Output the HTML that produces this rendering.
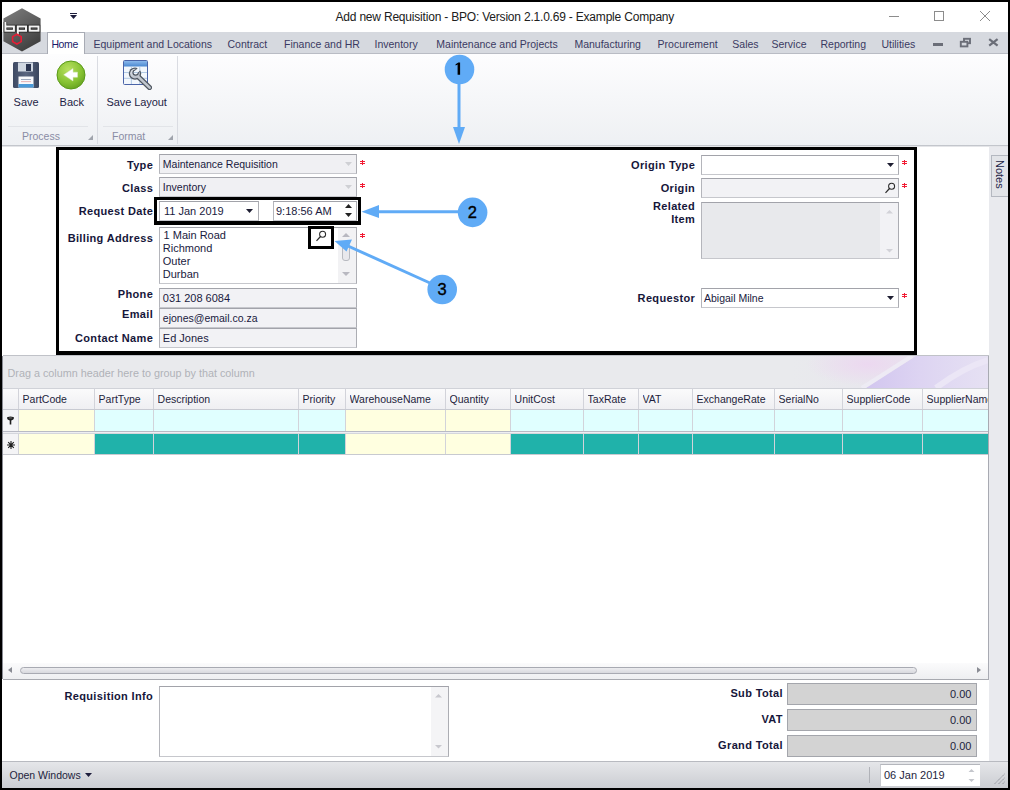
<!DOCTYPE html>
<html><head><meta charset="utf-8"><title>Add new Requisition</title>
<style>
html,body{margin:0;padding:0;}
body{width:1010px;height:790px;background:#000;position:relative;overflow:hidden;font-family:"Liberation Sans",sans-serif;}
body>div,body>svg{position:absolute;}
.t{white-space:nowrap;}
</style></head><body>
<div style="left:2px;top:2px;width:1006px;height:786px;background:#fff;"></div>
<div class="t" style="left:335.5px;top:10.84px;font-size:12px;line-height:12px;color:#202020;letter-spacing:-0.2px;">Add new Requisition - BPO: Version 2.1.0.69 - Example Company</div>
<div style="left:70px;top:13px;width:7px;height:1px;background:#1e1e3c;"></div>
<svg style="left:69px;top:15px" width="9" height="5"><path d="M1 0 L8 0 L4.5 4 Z" fill="#1e1e3c"/></svg>
<div style="left:889px;top:16px;width:10px;height:1px;background:#8c8c8c;"></div>
<div style="left:934px;top:11px;width:10px;height:10px;border:1px solid #8c8c8c;box-sizing:border-box;"></div>
<svg style="left:979px;top:10px" width="12" height="12"><path d="M1 1 L11 11 M11 1 L1 11" stroke="#8c8c8c" stroke-width="1"/></svg>
<div style="left:2px;top:32px;width:1006px;height:21px;background:#d6d9df;"></div>
<div style="left:2px;top:53px;width:1006px;height:1px;background:#b9bcc4;"></div>
<div style="left:47px;top:32px;width:38px;height:22px;background:#fff;border:1px solid #a8abb4;border-bottom:none;box-sizing:border-box;"></div>
<div class="t" style="left:51.4px;top:39.11px;font-size:10.5px;line-height:10.5px;color:#1a1a6a;letter-spacing:-0.35px;">Home</div>
<div class="t" style="left:93.5px;top:39.11px;font-size:10.5px;line-height:10.5px;color:#3a3a62;">Equipment and Locations</div>
<div class="t" style="left:227.5px;top:39.11px;font-size:10.5px;line-height:10.5px;color:#3a3a62;">Contract</div>
<div class="t" style="left:284px;top:39.11px;font-size:10.5px;line-height:10.5px;color:#3a3a62;">Finance and HR</div>
<div class="t" style="left:374.5px;top:39.11px;font-size:10.5px;line-height:10.5px;color:#3a3a62;">Inventory</div>
<div class="t" style="left:436.3px;top:39.11px;font-size:10.5px;line-height:10.5px;color:#3a3a62;">Maintenance and Projects</div>
<div class="t" style="left:574.4px;top:39.11px;font-size:10.5px;line-height:10.5px;color:#3a3a62;">Manufacturing</div>
<div class="t" style="left:657.6px;top:39.11px;font-size:10.5px;line-height:10.5px;color:#3a3a62;">Procurement</div>
<div class="t" style="left:732.3px;top:39.11px;font-size:10.5px;line-height:10.5px;color:#3a3a62;">Sales</div>
<div class="t" style="left:771.5px;top:39.11px;font-size:10.5px;line-height:10.5px;color:#3a3a62;">Service</div>
<div class="t" style="left:820.5px;top:39.11px;font-size:10.5px;line-height:10.5px;color:#3a3a62;">Reporting</div>
<div class="t" style="left:881.4px;top:39.11px;font-size:10.5px;line-height:10.5px;color:#3a3a62;">Utilities</div>
<div style="left:933px;top:43px;width:10px;height:2.5px;background:#6b6e78;"></div>
<svg style="left:959px;top:37px" width="13" height="11"><rect x="5" y="1.8" width="6" height="4.4" fill="none" stroke="#6b6e78" stroke-width="1.9"/><rect x="1.8" y="4.8" width="6.6" height="4.6" fill="#d6d9df" stroke="#6b6e78" stroke-width="1.9"/></svg>
<svg style="left:988px;top:38px" width="11" height="9"><path d="M1.2 1.2 L9.6 7.6 M9.6 1.2 L1.2 7.6" stroke="#6b6e78" stroke-width="2.2"/></svg>
<svg style="left:0px;top:0px" width="48" height="56" viewBox="0 0 48 56">
<defs><linearGradient id="lg" x1="0.2" y1="0" x2="0.8" y2="1"><stop offset="0" stop-color="#7a7a7a"/><stop offset="0.5" stop-color="#5c5c5c"/><stop offset="1" stop-color="#3a3a3a"/></linearGradient></defs>
<path d="M22 8.2 L40.6 18.4 L40.6 41.2 L22 51.4 L3.4 41.2 L3.4 18.4 Z" fill="url(#lg)"/>
<g fill="none" stroke="#1c1c1c" stroke-width="3.4" stroke-linejoin="miter">
<path d="M5.4 22 V30.7 H13.9 V26.5 H5.4"/><path d="M17.8 34.7 V26.5 H26 V30.7 H17.8"/><rect x="29.7" y="26.5" width="8.8" height="4.2"/>
</g>
<g fill="none" stroke="#f4f4f4" stroke-width="2" stroke-linejoin="miter">
<path d="M5.4 22 V30.7 H13.9 V26.5 H5.4"/><path d="M17.8 34.7 V26.5 H26 V30.7 H17.8"/><rect x="29.7" y="26.5" width="8.8" height="4.2"/>
</g>
<path d="M16.9 34.2 L21.2 36.6 L21.2 41.6 L16.9 44 L12.6 41.6 L12.6 36.6 Z" fill="none" stroke="#e81c34" stroke-width="1.6"/>
</svg>
<div style="left:2px;top:54px;width:1006px;height:91px;background:linear-gradient(#fdfdfe,#eef0f3);"></div>
<div style="left:2px;top:145px;width:1006px;height:1px;background:#c3c6cc;"></div>
<div style="left:2px;top:146px;width:1006px;height:1px;background:#e4e5e8;"></div>
<div style="left:97px;top:56px;width:1px;height:88px;background:#dadce2;"></div>
<div style="left:177px;top:56px;width:1px;height:88px;background:#dadce2;"></div>
<div style="left:8px;top:126px;width:80px;height:1px;background:#e2e4e8;"></div>
<div style="left:103px;top:126px;width:70px;height:1px;background:#e2e4e8;"></div>
<div class="t" style="left:13.6px;top:97.19px;font-size:11px;line-height:11px;color:#1e1e46;">Save</div>
<div class="t" style="left:59.6px;top:97.19px;font-size:11px;line-height:11px;color:#1e1e46;">Back</div>
<div class="t" style="left:106.6px;top:97.19px;font-size:11px;line-height:11px;color:#1e1e46;letter-spacing:-0.1px;">Save Layout</div>
<div class="t" style="left:22px;top:130.61px;font-size:10.5px;line-height:10.5px;color:#8a8ca4;">Process</div>
<div class="t" style="left:112px;top:130.61px;font-size:10.5px;line-height:10.5px;color:#8a8ca4;">Format</div>
<svg style="left:88px;top:135px" width="6" height="6"><path d="M5 0 L5 5 L0 5 Z" fill="#a0a4ac"/></svg>
<svg style="left:168px;top:135px" width="6" height="6"><path d="M5 0 L5 5 L0 5 Z" fill="#a0a4ac"/></svg>
<svg style="left:12px;top:61px" width="28" height="28" viewBox="0 0 28 28">
<defs><linearGradient id="fl" x1="0" y1="0" x2="1" y2="0"><stop offset="0" stop-color="#3e4a64"/><stop offset="0.5" stop-color="#5a6680"/><stop offset="1" stop-color="#3a465e"/></linearGradient></defs>
<rect x="1" y="1" width="26" height="26" rx="1.5" fill="url(#fl)"/>
<rect x="6" y="1.5" width="15" height="9" fill="#d0d8e2"/>
<rect x="14" y="3" width="5" height="7" fill="#2a3550"/>
<rect x="6.5" y="15.5" width="15" height="11" fill="#f8f9fc"/>
<rect x="6.5" y="23" width="15" height="3.5" fill="#4a9ad8"/>
<rect x="9" y="18" width="10" height="0.8" fill="#8896b0"/><rect x="9" y="20.3" width="10" height="0.8" fill="#e0a0a0"/>
</svg>
<svg style="left:56px;top:60px" width="30" height="30" viewBox="0 0 30 30">
<defs><radialGradient id="bg1" cx="0.4" cy="0.3" r="0.8"><stop offset="0" stop-color="#b8e060"/><stop offset="0.6" stop-color="#86c232"/><stop offset="1" stop-color="#5e9a1c"/></radialGradient></defs>
<circle cx="15" cy="15" r="14" fill="url(#bg1)" stroke="#5a9a18" stroke-width="1"/>
<path d="M7.7 14.8 L17 8.5 L17 12.2 L21.5 12.2 L21.5 17.2 L17 17.2 L17 21 Z" fill="#fff" stroke="#dfe8d0" stroke-width="0.5"/>
</svg>
<svg style="left:122px;top:59px" width="32" height="32" viewBox="0 0 32 32">
<defs>
<linearGradient id="hb" x1="0" y1="0" x2="0" y2="1"><stop offset="0" stop-color="#8ab8ec"/><stop offset="1" stop-color="#4a88d0"/></linearGradient>
<linearGradient id="wr" x1="0" y1="0" x2="1" y2="1"><stop offset="0" stop-color="#e4e8ee"/><stop offset="1" stop-color="#a8b0bc"/></linearGradient>
<mask id="m1"><rect width="32" height="32" fill="#fff"/><circle cx="13.6" cy="13.6" r="2" fill="#000"/><path d="M13.6 13.6 L19.5 7.7" stroke="#000" stroke-width="3.4"/></mask>
<mask id="m2"><rect width="32" height="32" fill="#fff"/><circle cx="13.6" cy="13.6" r="3.2" fill="#000"/><path d="M13.6 13.6 L19.5 7.7" stroke="#000" stroke-width="4.6"/></mask>
</defs>
<rect x="1.5" y="1.5" width="24" height="24" rx="1" fill="#f2f7fc" stroke="#4a64a8" stroke-width="1"/>
<rect x="2" y="2" width="23" height="5.5" fill="url(#hb)"/>
<path d="M2 13.5 H25 M2 19.3 H25 M9.4 7.5 V25 M17.8 7.5 V25" stroke="#aac4e0" stroke-width="0.9"/>
<g mask="url(#m1)"><circle cx="13" cy="14.6" r="6.2" fill="#4e5660"/><path d="M13 14.6 L27.6 28.6" stroke="#4e5660" stroke-width="5" stroke-linecap="round"/></g>
<g mask="url(#m2)"><circle cx="13" cy="14.6" r="4.9" fill="url(#wr)"/><path d="M13 14.6 L27.6 28.6" stroke="#c0c6ce" stroke-width="2.7" stroke-linecap="round"/></g>
</svg>
<div style="left:989px;top:147px;width:19px;height:614px;background:#e9eaee;"></div>
<div style="left:991px;top:155px;width:17px;height:42px;background:#e2e4e8;border:1px solid #b4b8c0;border-right:none;box-sizing:border-box;"></div>
<div class="t" style="left:992px;top:156px;width:15px;height:36px;font-size:11px;line-height:15px;color:#1e1e46;writing-mode:vertical-rl;text-align:center">Notes</div>
<div class="t" style="right:856.85px;top:159.69px;font-size:11px;line-height:11px;font-weight:bold;color:#16163a;letter-spacing:0.35px;">Type</div>
<div class="t" style="right:856.85px;top:182.69px;font-size:11px;line-height:11px;font-weight:bold;color:#16163a;letter-spacing:0.35px;">Class</div>
<div class="t" style="right:856.85px;top:206.19px;font-size:11px;line-height:11px;font-weight:bold;color:#16163a;letter-spacing:0.35px;">Request Date</div>
<div class="t" style="right:856.85px;top:232.69px;font-size:11px;line-height:11px;font-weight:bold;color:#16163a;letter-spacing:0.35px;">Billing Address</div>
<div class="t" style="right:856.85px;top:288.69px;font-size:11px;line-height:11px;font-weight:bold;color:#16163a;letter-spacing:0.35px;">Phone</div>
<div class="t" style="right:856.85px;top:308.69px;font-size:11px;line-height:11px;font-weight:bold;color:#16163a;letter-spacing:0.35px;">Email</div>
<div class="t" style="right:856.85px;top:332.69px;font-size:11px;line-height:11px;font-weight:bold;color:#16163a;letter-spacing:0.35px;">Contact Name</div>
<div style="left:159px;top:154px;width:198px;height:20px;background:#f0f0f3;border:1px solid;border-color:#a2a3aa #acadb3 #c6c7cc #b4b5bb;box-sizing:border-box;"></div>
<div class="t" style="left:162.8px;top:159.11px;font-size:10.5px;line-height:10.5px;color:#1a1a40;">Maintenance Requisition</div>
<svg style="left:345px;top:162px" width="8" height="5"><path d="M0 0 L7 0 L3.5 4 Z" fill="#cfd0d4"/></svg>
<svg style="left:360px;top:160px" width="5" height="5"><rect x="2" y="0" width="1" height="5" fill="#e8143c"/><rect x="0" y="1" width="5" height="1" fill="#f41c30"/><rect x="0" y="3" width="5" height="1" fill="#f41c30"/></svg>
<div style="left:159px;top:177px;width:198px;height:20px;background:#f0f0f3;border:1px solid;border-color:#a2a3aa #acadb3 #c6c7cc #b4b5bb;box-sizing:border-box;"></div>
<div class="t" style="left:162.8px;top:182.11px;font-size:10.5px;line-height:10.5px;color:#1a1a40;">Inventory</div>
<svg style="left:345px;top:185px" width="8" height="5"><path d="M0 0 L7 0 L3.5 4 Z" fill="#cfd0d4"/></svg>
<svg style="left:360px;top:183px" width="5" height="5"><rect x="2" y="0" width="1" height="5" fill="#e8143c"/><rect x="0" y="1" width="5" height="1" fill="#f41c30"/><rect x="0" y="3" width="5" height="1" fill="#f41c30"/></svg>
<div style="left:159px;top:201px;width:100px;height:20px;background:#fff;border:1px solid;border-color:#a2a3aa #acadb3 #c6c7cc #b4b5bb;box-sizing:border-box;"></div>
<div class="t" style="left:164px;top:205.69px;font-size:11px;line-height:11px;color:#1a1a40;">11 Jan 2019</div>
<svg style="left:246px;top:209px" width="8" height="5"><path d="M0 0 L7 0 L3.5 4 Z" fill="#1e1e32"/></svg>
<div style="left:273px;top:201px;width:84px;height:20px;background:#fff;border:1px solid;border-color:#a2a3aa #acadb3 #c6c7cc #b4b5bb;box-sizing:border-box;"></div>
<div class="t" style="left:276px;top:205.69px;font-size:11px;line-height:11px;color:#1a1a40;">9:18:56 AM</div>
<svg style="left:345px;top:203px" width="8" height="16"><path d="M0 5 L7 5 L3.5 1 Z M0 10 L7 10 L3.5 14 Z" fill="#222"/></svg>
<div style="left:159px;top:227px;width:198px;height:57px;background:#fff;border:1px solid;border-color:#a2a3aa #acadb3 #c6c7cc #b4b5bb;box-sizing:border-box;"></div>
<div class="t" style="left:163.60000000000002px;top:229.69px;font-size:11px;line-height:11px;color:#1a1a40;">1 Main Road</div>
<div class="t" style="left:162.8px;top:242.69px;font-size:11px;line-height:11px;color:#1a1a40;">Richmond</div>
<div class="t" style="left:162.8px;top:255.69px;font-size:11px;line-height:11px;color:#1a1a40;">Outer</div>
<div class="t" style="left:162.8px;top:268.69px;font-size:11px;line-height:11px;color:#1a1a40;">Durban</div>
<div style="left:338px;top:228px;width:18px;height:55px;background:#f2f2f4;"></div>
<svg style="left:342px;top:233px" width="9" height="5"><path d="M0 4 L8 4 L4 0 Z" fill="#b8b8c0"/></svg>
<div style="left:342px;top:243px;width:8px;height:18px;background:#e8e8ec;border:1px solid #b8bac0;border-radius:3px;box-sizing:border-box;"></div>
<svg style="left:342px;top:272px" width="9" height="5"><path d="M0 0 L8 0 L4 4 Z" fill="#b8b8c0"/></svg>
<svg style="left:315px;top:230px" width="12" height="12"><circle cx="7.6" cy="4.3" r="3" fill="none" stroke="#2a2a2a" stroke-width="1.05"/><path d="M5.5 6.5 L1.5 10.8" stroke="#2a2a2a" stroke-width="1.2"/></svg>
<svg style="left:360px;top:233px" width="5" height="5"><rect x="2" y="0" width="1" height="5" fill="#e8143c"/><rect x="0" y="1" width="5" height="1" fill="#f41c30"/><rect x="0" y="3" width="5" height="1" fill="#f41c30"/></svg>
<div style="left:159px;top:288px;width:198px;height:20px;background:#f2f2f5;border:1px solid;border-color:#a2a3aa #acadb3 #c6c7cc #b4b5bb;box-sizing:border-box;"></div>
<div class="t" style="left:162.8px;top:292.69px;font-size:11px;line-height:11px;color:#1a1a40;">031 208 6084</div>
<div style="left:159px;top:308px;width:198px;height:20px;background:#f2f2f5;border:1px solid;border-color:#a2a3aa #acadb3 #c6c7cc #b4b5bb;box-sizing:border-box;"></div>
<div class="t" style="left:162.8px;top:313.11px;font-size:10.5px;line-height:10.5px;color:#1a1a40;">ejones@email.co.za</div>
<div style="left:159px;top:328px;width:198px;height:20px;background:#f2f2f5;border:1px solid;border-color:#a2a3aa #acadb3 #c6c7cc #b4b5bb;box-sizing:border-box;"></div>
<div class="t" style="left:162.8px;top:332.69px;font-size:11px;line-height:11px;color:#1a1a40;">Ed Jones</div>
<div class="t" style="right:314.85px;top:159.69px;font-size:11px;line-height:11px;font-weight:bold;color:#16163a;letter-spacing:0.35px;">Origin Type</div>
<div class="t" style="right:314.85px;top:182.69px;font-size:11px;line-height:11px;font-weight:bold;color:#16163a;letter-spacing:0.35px;">Origin</div>
<div class="t" style="right:314.85px;top:200.69px;font-size:11px;line-height:11px;font-weight:bold;color:#16163a;letter-spacing:0.35px;">Related</div>
<div class="t" style="right:314.85px;top:213.69px;font-size:11px;line-height:11px;font-weight:bold;color:#16163a;letter-spacing:0.35px;">Item</div>
<div class="t" style="right:314.85px;top:292.69px;font-size:11px;line-height:11px;font-weight:bold;color:#16163a;letter-spacing:0.35px;">Requestor</div>
<div style="left:701px;top:155px;width:198px;height:20px;background:#fff;border:1px solid;border-color:#a2a3aa #acadb3 #c6c7cc #b4b5bb;box-sizing:border-box;"></div>
<svg style="left:887px;top:163px" width="8" height="5"><path d="M0 0 L7 0 L3.5 4 Z" fill="#1e1e32"/></svg>
<svg style="left:902px;top:160px" width="5" height="5"><rect x="2" y="0" width="1" height="5" fill="#e8143c"/><rect x="0" y="1" width="5" height="1" fill="#f41c30"/><rect x="0" y="3" width="5" height="1" fill="#f41c30"/></svg>
<div style="left:701px;top:178px;width:198px;height:20px;background:#f2f2f5;border:1px solid;border-color:#a2a3aa #acadb3 #c6c7cc #b4b5bb;box-sizing:border-box;"></div>
<svg style="left:884px;top:182px" width="12" height="12"><circle cx="7.6" cy="4.3" r="3" fill="none" stroke="#2a2a2a" stroke-width="1.05"/><path d="M5.5 6.5 L1.5 10.8" stroke="#2a2a2a" stroke-width="1.2"/></svg>
<svg style="left:902px;top:183px" width="5" height="5"><rect x="2" y="0" width="1" height="5" fill="#e8143c"/><rect x="0" y="1" width="5" height="1" fill="#f41c30"/><rect x="0" y="3" width="5" height="1" fill="#f41c30"/></svg>
<div style="left:701px;top:202px;width:198px;height:57px;background:#e8e9ec;border:1px solid;border-color:#a2a3aa #acadb3 #c6c7cc #b4b5bb;box-sizing:border-box;"></div>
<div style="left:880px;top:203px;width:18px;height:55px;background:#f2f2f5;"></div>
<svg style="left:886px;top:210px" width="8" height="4"><path d="M0 3.5 L7 3.5 L3.5 0 Z" fill="#d2d2d8"/></svg>
<svg style="left:886px;top:249px" width="8" height="4"><path d="M0 0 L7 0 L3.5 3.5 Z" fill="#d2d2d8"/></svg>
<div style="left:701px;top:288px;width:198px;height:20px;background:#fff;border:1px solid;border-color:#a2a3aa #acadb3 #c6c7cc #b4b5bb;box-sizing:border-box;"></div>
<div class="t" style="left:704px;top:293.11px;font-size:10.5px;line-height:10.5px;color:#1a1a40;">Abigail Milne</div>
<svg style="left:887px;top:296px" width="8" height="5"><path d="M0 0 L7 0 L3.5 4 Z" fill="#1e1e32"/></svg>
<svg style="left:902px;top:293px" width="5" height="5"><rect x="2" y="0" width="1" height="5" fill="#e8143c"/><rect x="0" y="1" width="5" height="1" fill="#f41c30"/><rect x="0" y="3" width="5" height="1" fill="#f41c30"/></svg>
<div style="left:2px;top:356px;width:987px;height:323px;background:#fff;"></div>
<div style="left:2px;top:356px;width:1px;height:323px;background:#8a8c94;"></div>
<div style="left:3px;top:356px;width:986px;height:32px;background:linear-gradient(90deg,#e9eaed 0%,#e9eaed 80%,#e6e2ee 100%);"></div>
<div style="left:3px;top:355px;width:986px;height:1px;background:#c0c2c8;"></div>
<div class="t" style="left:7.5px;top:367.86px;font-size:10.8px;line-height:10.8px;color:#b0b2b8;">Drag a column header here to group by that column</div>
<svg style="left:700px;top:356px" width="288" height="32" viewBox="0 0 288 32">
<defs>
<radialGradient id="pk" cx="0.5" cy="0.5" r="0.5"><stop offset="0" stop-color="#ecd8f0" stop-opacity="1"/><stop offset="1" stop-color="#ecd8f0" stop-opacity="0"/></radialGradient>
<linearGradient id="b1" x1="0" y1="0" x2="1" y2="0"><stop offset="0" stop-color="#d2c6ef"/><stop offset="0.45" stop-color="#ddd4f2"/><stop offset="1" stop-color="#e6e1f3"/></linearGradient>
</defs>
<ellipse cx="168" cy="8" rx="62" ry="22" fill="url(#pk)"/>
<path d="M166 32 L216 0 L288 0 L288 32 Z" fill="url(#b1)"/>
<path d="M162 32 L212 0" stroke="#efedf6" stroke-width="4" opacity="0.8"/>
<path d="M236 32 Q262 12 288 4" stroke="#ebe6f6" stroke-width="6" fill="none"/>
</svg>
<div style="left:3px;top:388px;width:985px;height:21px;background:linear-gradient(#fbfbfc,#efeff2);"></div>
<div style="left:3px;top:388px;width:985px;height:1px;background:#d0d2d8;"></div>
<div style="left:3px;top:410px;width:15px;height:44px;background:#f4f4f6;"></div>
<div style="left:18px;top:410px;width:76px;height:21px;background:#ffffe0;"></div>
<div style="left:18px;top:434px;width:76px;height:20px;background:#ffffe0;"></div>
<div class="t" style="left:22.6px;top:392px;width:72px;overflow:hidden;white-space:nowrap;font-size:10.5px;line-height:14px;color:#1e1e3c">PartCode</div>
<div style="left:94px;top:410px;width:59px;height:21px;background:#e0ffff;"></div>
<div style="left:94px;top:434px;width:59px;height:20px;background:#20b2aa;"></div>
<div class="t" style="left:98.6px;top:392px;width:55px;overflow:hidden;white-space:nowrap;font-size:10.5px;line-height:14px;color:#1e1e3c">PartType</div>
<div style="left:153px;top:410px;width:145px;height:21px;background:#e0ffff;"></div>
<div style="left:153px;top:434px;width:145px;height:20px;background:#20b2aa;"></div>
<div class="t" style="left:157.6px;top:392px;width:141px;overflow:hidden;white-space:nowrap;font-size:10.5px;line-height:14px;color:#1e1e3c">Description</div>
<div style="left:298px;top:410px;width:47px;height:21px;background:#e0ffff;"></div>
<div style="left:298px;top:434px;width:47px;height:20px;background:#20b2aa;"></div>
<div class="t" style="left:302.6px;top:392px;width:43px;overflow:hidden;white-space:nowrap;font-size:10.5px;line-height:14px;color:#1e1e3c">Priority</div>
<div style="left:345px;top:410px;width:100px;height:21px;background:#ffffe0;"></div>
<div style="left:345px;top:434px;width:100px;height:20px;background:#ffffe0;"></div>
<div class="t" style="left:349.6px;top:392px;width:96px;overflow:hidden;white-space:nowrap;font-size:10.5px;line-height:14px;color:#1e1e3c">WarehouseName</div>
<div style="left:445px;top:410px;width:65px;height:21px;background:#ffffe0;"></div>
<div style="left:445px;top:434px;width:65px;height:20px;background:#ffffe0;"></div>
<div class="t" style="left:449.6px;top:392px;width:61px;overflow:hidden;white-space:nowrap;font-size:10.5px;line-height:14px;color:#1e1e3c">Quantity</div>
<div style="left:510px;top:410px;width:73px;height:21px;background:#e0ffff;"></div>
<div style="left:510px;top:434px;width:73px;height:20px;background:#20b2aa;"></div>
<div class="t" style="left:514.6px;top:392px;width:69px;overflow:hidden;white-space:nowrap;font-size:10.5px;line-height:14px;color:#1e1e3c">UnitCost</div>
<div style="left:583px;top:410px;width:55px;height:21px;background:#e0ffff;"></div>
<div style="left:583px;top:434px;width:55px;height:20px;background:#20b2aa;"></div>
<div class="t" style="left:587.6px;top:392px;width:51px;overflow:hidden;white-space:nowrap;font-size:10.5px;line-height:14px;color:#1e1e3c">TaxRate</div>
<div style="left:638px;top:410px;width:54px;height:21px;background:#e0ffff;"></div>
<div style="left:638px;top:434px;width:54px;height:20px;background:#20b2aa;"></div>
<div class="t" style="left:642.6px;top:392px;width:50px;overflow:hidden;white-space:nowrap;font-size:10.5px;line-height:14px;color:#1e1e3c">VAT</div>
<div style="left:692px;top:410px;width:82px;height:21px;background:#e0ffff;"></div>
<div style="left:692px;top:434px;width:82px;height:20px;background:#20b2aa;"></div>
<div class="t" style="left:696.6px;top:392px;width:78px;overflow:hidden;white-space:nowrap;font-size:10.5px;line-height:14px;color:#1e1e3c">ExchangeRate</div>
<div style="left:774px;top:410px;width:68px;height:21px;background:#e0ffff;"></div>
<div style="left:774px;top:434px;width:68px;height:20px;background:#20b2aa;"></div>
<div class="t" style="left:778.6px;top:392px;width:64px;overflow:hidden;white-space:nowrap;font-size:10.5px;line-height:14px;color:#1e1e3c">SerialNo</div>
<div style="left:842px;top:410px;width:80px;height:21px;background:#e0ffff;"></div>
<div style="left:842px;top:434px;width:80px;height:20px;background:#20b2aa;"></div>
<div class="t" style="left:846.6px;top:392px;width:76px;overflow:hidden;white-space:nowrap;font-size:10.5px;line-height:14px;color:#1e1e3c">SupplierCode</div>
<div style="left:922px;top:410px;width:66px;height:21px;background:#e0ffff;"></div>
<div style="left:922px;top:434px;width:66px;height:20px;background:#20b2aa;"></div>
<div class="t" style="left:926.6px;top:392px;width:62px;overflow:hidden;white-space:nowrap;font-size:10.5px;line-height:14px;color:#1e1e3c">SupplierName</div>
<div style="left:18px;top:388px;width:1px;height:66px;background:#d2d3da;"></div>
<div style="left:94px;top:388px;width:1px;height:66px;background:#d2d3da;"></div>
<div style="left:153px;top:388px;width:1px;height:66px;background:#d2d3da;"></div>
<div style="left:298px;top:388px;width:1px;height:66px;background:#d2d3da;"></div>
<div style="left:345px;top:388px;width:1px;height:66px;background:#d2d3da;"></div>
<div style="left:445px;top:388px;width:1px;height:66px;background:#d2d3da;"></div>
<div style="left:510px;top:388px;width:1px;height:66px;background:#d2d3da;"></div>
<div style="left:583px;top:388px;width:1px;height:66px;background:#d2d3da;"></div>
<div style="left:638px;top:388px;width:1px;height:66px;background:#d2d3da;"></div>
<div style="left:692px;top:388px;width:1px;height:66px;background:#d2d3da;"></div>
<div style="left:774px;top:388px;width:1px;height:66px;background:#d2d3da;"></div>
<div style="left:842px;top:388px;width:1px;height:66px;background:#d2d3da;"></div>
<div style="left:922px;top:388px;width:1px;height:66px;background:#d2d3da;"></div>
<div style="left:988px;top:388px;width:1px;height:66px;background:#d2d3da;"></div>
<div style="left:3px;top:409px;width:985px;height:1px;background:#c8cad2;"></div>
<div style="left:3px;top:431px;width:985px;height:1px;background:#b8bac4;"></div>
<div style="left:3px;top:432px;width:985px;height:1px;background:#eeeef2;"></div>
<div style="left:3px;top:433px;width:985px;height:1px;background:#d4d6dc;"></div>
<div style="left:3px;top:454px;width:985px;height:1px;background:#c8cad0;"></div>
<svg style="left:6px;top:416px" width="9" height="10"><path d="M1 2 Q1 0.5 4.5 0.5 Q8 0.5 8 2 Q8 3.5 5.3 4.6 L5.3 8.6 L3.7 8.6 L3.7 4.6 Q1 3.5 1 2 Z" fill="#1e1e1e"/><ellipse cx="4.5" cy="1.9" rx="1.8" ry="0.6" fill="#666"/></svg>
<svg style="left:6px;top:440px" width="10" height="10"><path d="M5 1 V9 M1 5 H9 M2.2 2.2 L7.8 7.8 M7.8 2.2 L2.2 7.8" stroke="#1e1e1e" stroke-width="1.1"/></svg>
<div style="left:988px;top:356px;width:1px;height:323px;background:#a8aab2;"></div>
<div style="left:3px;top:663px;width:985px;height:16px;background:linear-gradient(#fbfbfc,#eeeff1);"></div>
<div style="left:3px;top:679px;width:986px;height:1px;background:#a8aab0;"></div>
<div style="left:20px;top:667px;width:897px;height:7px;background:linear-gradient(#ececef,#d8d9de);border:1px solid #a8aab2;border-radius:3.5px;box-sizing:border-box;"></div>
<svg style="left:8px;top:667px" width="5" height="7"><path d="M4 0 L4 6 L0 3 Z" fill="#8a8c94"/></svg>
<svg style="left:977px;top:667px" width="5" height="7"><path d="M0 0 L0 6 L4 3 Z" fill="#8a8c94"/></svg>
<div class="t" style="right:856.85px;top:690.69px;font-size:11px;line-height:11px;font-weight:bold;color:#16163a;letter-spacing:0.35px;">Requisition Info</div>
<div style="left:159px;top:686px;width:290px;height:71px;background:#fff;border:1px solid;border-color:#a2a3aa #acadb3 #c6c7cc #b4b5bb;box-sizing:border-box;"></div>
<div style="left:431px;top:687px;width:17px;height:69px;background:#f4f4f6;"></div>
<svg style="left:435px;top:694px" width="8" height="4"><path d="M0 3.5 L7 3.5 L3.5 0 Z" fill="#c8c8ce"/></svg>
<svg style="left:435px;top:745px" width="8" height="4"><path d="M0 0 L7 0 L3.5 3.5 Z" fill="#c8c8ce"/></svg>
<div class="t" style="right:227.14999999999998px;top:687.69px;font-size:11px;line-height:11px;font-weight:bold;color:#16163a;letter-spacing:0.35px;">Sub Total</div>
<div class="t" style="right:227.14999999999998px;top:713.69px;font-size:11px;line-height:11px;font-weight:bold;color:#16163a;letter-spacing:0.35px;">VAT</div>
<div class="t" style="right:227.14999999999998px;top:739.69px;font-size:11px;line-height:11px;font-weight:bold;color:#16163a;letter-spacing:0.35px;">Grand Total</div>
<div style="left:787px;top:683px;width:190px;height:22px;background:#d3d3d3;border:1px solid #a4a6ac;box-sizing:border-box;"></div>
<div class="t" style="right:38.60000000000002px;top:688.69px;font-size:11px;line-height:11px;color:#1e1e3c;">0.00</div>
<div style="left:787px;top:709px;width:190px;height:22px;background:#d3d3d3;border:1px solid #a4a6ac;box-sizing:border-box;"></div>
<div class="t" style="right:38.60000000000002px;top:714.69px;font-size:11px;line-height:11px;color:#1e1e3c;">0.00</div>
<div style="left:787px;top:735px;width:190px;height:22px;background:#d3d3d3;border:1px solid #a4a6ac;box-sizing:border-box;"></div>
<div class="t" style="right:38.60000000000002px;top:740.69px;font-size:11px;line-height:11px;color:#1e1e3c;">0.00</div>
<div style="left:2px;top:761px;width:1006px;height:27px;background:linear-gradient(#e6e7ea,#cbcdd2);"></div>
<div style="left:2px;top:761px;width:1006px;height:1px;background:#b8bac0;"></div>
<div class="t" style="left:9.5px;top:770.11px;font-size:10.5px;line-height:10.5px;color:#1e1e3c;">Open Windows</div>
<svg style="left:85px;top:773px" width="8" height="5"><path d="M0 0 L7 0 L3.5 4 Z" fill="#1e1e3c"/></svg>
<div style="left:869px;top:767px;width:1px;height:16px;background:#b0b2b8;"></div>
<div style="left:880px;top:764px;width:100px;height:22px;background:#fff;border-top:1px solid #b4b6bc;border-left:1px solid #c8cacf;box-sizing:border-box;"></div>
<div class="t" style="left:884px;top:769.69px;font-size:11px;line-height:11px;color:#1e1e3c;">06 Jan 2019</div>
<svg style="left:968px;top:768px" width="8" height="16"><path d="M0.5 4 L6.5 4 L3.5 1 Z M0.5 11 L6.5 11 L3.5 14 Z" fill="#c4c6cc"/></svg>
<svg style="left:993px;top:772px" width="13" height="13"><path d="M11.5 2 L1.5 12 M11.5 6 L5.5 12 M11.5 10 L9.5 12" stroke="#8a8c94" stroke-width="1" stroke-dasharray="1.2 0.6"/></svg>
<div style="left:56px;top:147px;width:861px;height:208px;border:3px solid #000;border-bottom-width:4px;box-sizing:border-box;"></div>
<div style="left:154px;top:197px;width:207px;height:28px;border:3px solid #000;border-bottom-width:4px;box-sizing:border-box;"></div>
<div style="left:308px;top:226px;width:26px;height:23px;border:3px solid #000;box-sizing:border-box;"></div>
<svg style="left:0;top:0" width="1010" height="790">
<line x1="459" y1="84" x2="459" y2="128" stroke="#60abf6" stroke-width="3"/>
<path d="M453 127 L465 127 L459 144 Z" fill="#60abf6"/>
<circle cx="459.5" cy="69.5" r="14.8" fill="#60abf6"/>
<line x1="460" y1="211.7" x2="377" y2="211.7" stroke="#60abf6" stroke-width="3"/>
<path d="M379 205 L379 218 L361.5 211.7 Z" fill="#60abf6"/>
<circle cx="472.6" cy="212.4" r="14.8" fill="#60abf6"/>
<line x1="430" y1="283" x2="348" y2="246" stroke="#60abf6" stroke-width="3"/>
<path d="M352 239.5 L346.5 251.5 L334.5 241 Z" fill="#60abf6"/>
<circle cx="442.2" cy="289.5" r="14.8" fill="#60abf6"/>
<path d="M457.6 74.8 V64.6 Q456.8 65.3 455.6 65.6 L455.6 64.3 Q457.5 63.4 458.3 62.6 L460.1 62.6 V74.8 Z" fill="#000"/>
<text x="472.4" y="218" font-family="Liberation Sans" font-size="16.5" text-anchor="middle" fill="#000" stroke="#000" stroke-width="0.35">2</text>
<text x="442.2" y="295" font-family="Liberation Sans" font-size="16.5" text-anchor="middle" fill="#000" stroke="#000" stroke-width="0.35">3</text>
</svg>
</body></html>
